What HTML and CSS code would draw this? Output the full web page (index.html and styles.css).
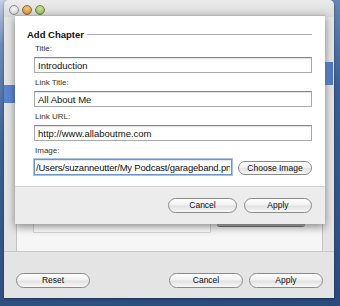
FILE: index.html
```html
<!DOCTYPE html>
<html lang="en">
  <head>
    <meta charset="UTF-8" />
    <meta name="viewport" content="width=device-width, initial-scale=1.0" />
    <title>Add Chapter</title>
    <link rel="stylesheet" href="styles.css">
  </head>
  <body>
    <div class="window">
      <!-- Title bar -->
      <div class="titlebar">
        <span class="light close"></span>
        <span class="light min"></span>
        <span class="light zoom"></span>
      </div>

      <!-- Window content (mostly hidden by the sheet) -->
      <div class="content">
        <div class="side-left"><div class="sel"></div></div>
        <div class="panel">
          <div class="panel-bottom">
            <div class="list-box"></div>
            <div class="hidden-btn"></div>
          </div>
        </div>
        <div class="side-right"><div class="sel"></div></div>
      </div>

      <div class="bottom-bar">
        <button class="aqua wide">Reset</button>
        <div class="spacer"></div>
        <button class="aqua wide">Cancel</button>
        <button class="aqua wide">Apply</button>
      </div>

      <!-- Add Chapter sheet -->
      <div class="sheet">
        <div class="sheet-body">
          <div class="group-title">
            <span>Add Chapter</span>
            <div class="rule"></div>
          </div>

          <div class="field">
            <label>Title:</label>
            <input type="text" value="Introduction" readonly />
          </div>
          <div class="field">
            <label>Link Title:</label>
            <input type="text" value="All About Me" readonly />
          </div>
          <div class="field">
            <label>Link URL:</label>
            <input type="text" value="http://www.allaboutme.com" readonly />
          </div>
          <div class="field">
            <label>Image:</label>
            <div class="image-row">
              <input type="text" class="focused" value="/Users/suzanneutter/My Podcast/garageband.png" readonly />
              <button class="aqua choose">Choose Image</button>
            </div>
          </div>
        </div>
        <div class="sheet-footer">
          <button class="aqua cancel">Cancel</button>
          <button class="aqua apply">Apply</button>
        </div>
      </div>
    </div>
  </body>
</html>
```

FILE: styles.css
```css
:root {
  --desk-light: #c3cfe2;
  --desk: #3d5f93;
  --desk-dark: #2b4a7c;
  --win-bg: #e4e4e4;
  --sheet-bg: #ffffff;
  --footer-bg: #ececec;
  --sel-blue: #5b84d2;
  --text: #111;
}

body {
  margin: 0;
  width: 340px;
  height: 306px;
  overflow: hidden;
  background: linear-gradient(170deg, var(--desk-light) 0%, #6f8bb8 12%, var(--desk) 40%, var(--desk-dark) 100%);
  font-family: "Liberation Sans", Arial, sans-serif;
  color: var(--text);
}

.window {
  position: relative;
  margin-left: 4px;
  width: 330px;
  height: 298px;
  background: var(--win-bg);
  border-radius: 5px 5px 0 0;
  display: flex;
  flex-direction: column;
  box-shadow: 0 1px 3px rgba(0, 0, 0, 0.4);
}

.titlebar {
  height: 15px;
  display: flex;
  align-items: center;
  padding: 2px 0 0 5px;
  gap: 3px;
  background: linear-gradient(#ececec, #d9d9d9);
  border-radius: 5px 5px 0 0;
}

.light {
  width: 10px;
  height: 10px;
  border-radius: 50%;
  box-sizing: border-box;
  border: 1px solid #8d8d8d;
}

.close {
  background: radial-gradient(circle at 50% 35%, #fafafa, #c9c9c9);
}

.min {
  background: radial-gradient(circle at 50% 35%, #f3c98a, #c9842e);
  border-color: #9b6a2c;
}

.zoom {
  background: radial-gradient(circle at 50% 35%, #cfe3a0, #86ad48);
  border-color: #6c8b3a;
}

.content {
  flex: 1;
  display: flex;
}

.side-left {
  width: 12px;
}

.side-left .sel {
  margin-top: 68px;
  height: 18px;
  background: var(--sel-blue);
}

.side-right {
  width: 11px;
}

.side-right .sel {
  margin: 45px 1px 0 2px;
  height: 23px;
  background: linear-gradient(90deg, #6d93d8, #4a72c0);
}

.panel {
  width: 305px;
  margin-top: 20px;
  background: #f6f6f6;
  border: 1px solid #c4c4c4;
  border-bottom: none;
  display: flex;
  flex-direction: column;
  justify-content: flex-end;
}

.panel-bottom {
  height: 27px;
  display: flex;
  align-items: flex-start;
}

.list-box {
  width: 176px;
  height: 8px;
  margin-left: 16px;
  background: #fff;
  border: 1px solid #d6d6d6;
  border-top: none;
}

.hidden-btn {
  width: 88px;
  height: 2px;
  margin-left: 6px;
  border-radius: 0 0 6px 6px;
  border-bottom: 1px solid #7a7a7a;
  background: #b8b8b8;
}

.bottom-bar {
  height: 47px;
  box-sizing: border-box;
  border-top: 1px solid #c8c8c8;
  padding: 21px 11px 0 12px;
  display: flex;
  align-items: flex-start;
  gap: 6px;
}

.spacer {
  flex: 1;
}

.aqua {
  height: 15px;
  box-sizing: border-box;
  padding: 0;
  border: 1px solid #8a8a8a;
  border-radius: 8px;
  background: linear-gradient(#ffffff, #f1f1f1 45%, #e2e2e2 55%, #f7f7f7);
  font-family: "Liberation Sans", Arial, sans-serif;
  font-size: 8.5px;
  color: #111;
  line-height: 13px;
  text-align: center;
}

.wide {
  width: 74px;
}

/* Sheet */
.sheet {
  position: absolute;
  left: 11px;
  top: 15px;
  width: 310px;
  height: 208px;
  display: flex;
  flex-direction: column;
  box-shadow: 0 3px 8px rgba(0, 0, 0, 0.45);
  border-top: 1px solid #b5b5b5;
}

.sheet-body {
  height: 170px;
  box-sizing: border-box;
  background: var(--sheet-bg);
  padding: 12px 13px 0 12px;
}

.group-title {
  display: flex;
  align-items: center;
  height: 12px;
  margin-bottom: 3px;
  font-weight: bold;
  font-size: 9.5px;
}

.rule {
  flex: 1;
  height: 1px;
  margin-left: 3px;
  background: #acacac;
}

.field {
  padding-left: 7px;
  margin-bottom: 4px;
}

.field label {
  display: block;
  height: 12px;
  margin: 0 0 2px 1px;
  font-size: 8px;
  line-height: 12px;
  color: #333;
}

.field input {
  display: block;
  width: 278px;
  height: 16px;
  box-sizing: border-box;
  padding: 0 3px;
  border: 1px solid #a9a9a9;
  border-top-color: #858585;
  box-shadow: inset 0 1px 1px rgba(0, 0, 0, 0.12);
  font-family: "Liberation Sans", Arial, sans-serif;
  font-size: 9.5px;
  color: var(--text);
  outline: none;
}

.image-row {
  display: flex;
  align-items: center;
}

.image-row input.focused {
  width: 198px;
  padding: 0 1px;
  letter-spacing: -0.2px;
  border: 1px solid #6e93c9;
  box-shadow: 0 0 0 1px #a8c3e8, inset 0 1px 1px rgba(0, 0, 0, 0.1);
}

.choose {
  width: 74px;
  height: 14px;
  margin: 2px 0 0 6px;
  line-height: 12px;
}

.sheet-footer {
  flex: 1;
  background: var(--footer-bg);
  border-top: 1px solid #d4d4d4;
  display: flex;
  justify-content: flex-end;
  align-items: center;
  gap: 7px;
  padding-right: 13px;
}

.cancel {
  width: 69px;
}

.apply {
  width: 68px;
}
```
